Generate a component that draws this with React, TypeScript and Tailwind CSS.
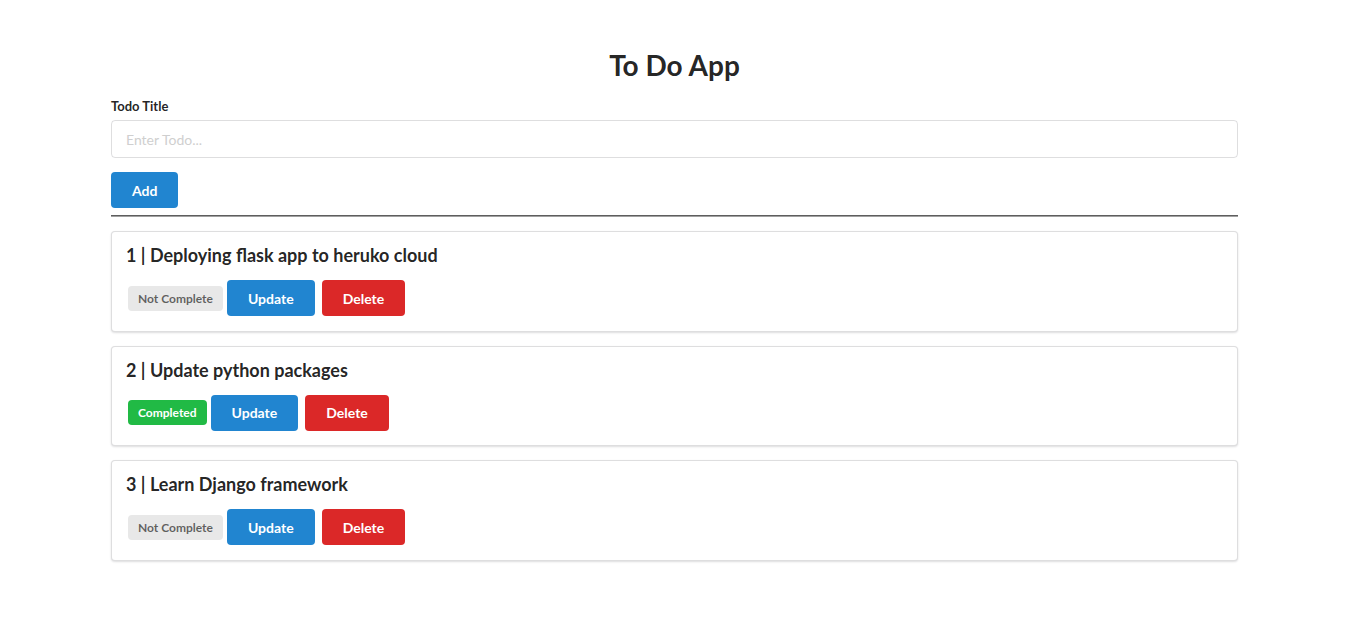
import React, { useState } from 'react';

// ------------------------------------------------------------
// Types
// ------------------------------------------------------------

interface Todo {
  id: number;
  title: string;
  complete: boolean;
}

const initialTodos: Todo[] = [
  { id: 1, title: 'Deploying flask app to heruko cloud', complete: false },
  { id: 2, title: 'Update python packages', complete: true },
  { id: 3, title: 'Learn Django framework', complete: false },
];

// ------------------------------------------------------------
// Todo Segment
// ------------------------------------------------------------

function TodoItem({ todo }: { todo: Todo }) {
  return (
    <div className="mt-[14px] rounded-[4px] border border-[#22242626] bg-white px-[14px] pt-[12px] pb-[14.5px] shadow-[0_1px_2px_0_rgba(34,36,38,0.15)]">
      <h3 className="text-[18px] font-bold leading-[23px] text-[#000000de]">
        {todo.id} | {todo.title}
      </h3>
      <div className="mt-[13px] flex items-center">
        {todo.complete ? (
          <span className="ml-[2px] mr-[4px] rounded-[4px] bg-[#21ba45] px-[10px] py-[6px] text-[12px] font-bold leading-[13px] text-white">
            Completed
          </span>
        ) : (
          <span className="ml-[2px] mr-[4px] rounded-[4px] bg-[#e8e8e8] px-[10px] py-[6px] text-[12px] font-bold leading-[13px] text-[#00000099]">
            Not Complete
          </span>
        )}
        <button className="mr-[7px] h-[36px] rounded-[4px] bg-[#2185d0] px-[21px] text-[14px] font-bold text-white">
          Update
        </button>
        <button className="h-[36px] rounded-[4px] bg-[#db2828] px-[21px] text-[14px] font-bold text-white">
          Delete
        </button>
      </div>
    </div>
  );
}

// ------------------------------------------------------------
// Main
// ------------------------------------------------------------

export default function App() {
  const [title, setTitle] = useState('');
  const [todos] = useState<Todo[]>(initialTodos);

  return (
    <div className="min-h-screen bg-white font-['Lato','Liberation_Sans',sans-serif] text-[14px] text-[#000000de]">
      <div className="mx-auto w-[1127px] pt-[47px]">
        <h1 className="text-center text-[28px] font-bold leading-[36px] text-[#000000de]">To Do App</h1>

        <form className="mt-[14px]" onSubmit={(e) => e.preventDefault()}>
          <label className="mb-[5px] block text-[13px] font-bold leading-[18px] text-[#000000de]">
            Todo Title
          </label>
          <input
            type="text"
            placeholder="Enter Todo..."
            value={title}
            onChange={(e) => setTitle(e.target.value)}
            className="block h-[38px] w-full rounded-[4px] border border-[#22242626] px-[14px] text-[14px] text-[#000000de] outline-none placeholder:text-[#cfcfcf]"
          />
          <button
            type="submit"
            className="mt-[14px] h-[36px] rounded-[4px] bg-[#2185d0] px-[21px] text-[14px] font-bold text-white"
          >
            Add
          </button>
        </form>

        <hr className="mt-[7px] border-t border-b border-t-[#5e5e5e] border-b-[#a0a0a0]" />

        <div className="mt-[1px]">
          {todos.map((t) => (
            <TodoItem key={t.id} todo={t} />
          ))}
        </div>
      </div>
    </div>
  );
}
